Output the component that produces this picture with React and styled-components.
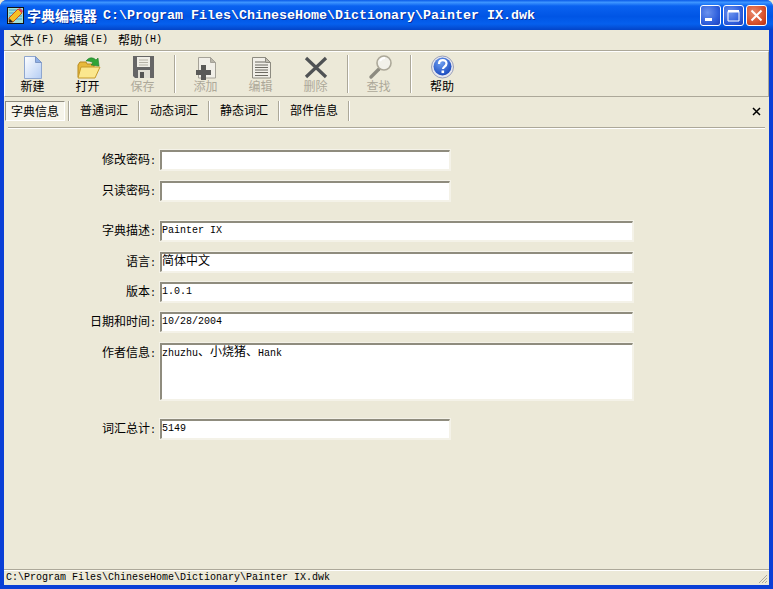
import React from "react";
import styled, { createGlobalStyle } from "styled-components";

const CJK = `"Noto Sans CJK SC", "Liberation Sans", sans-serif`;
const MONO = `"Liberation Mono", "Noto Sans CJK SC", monospace`;

const GlobalStyle = createGlobalStyle`
  html, body { margin: 0; padding: 0; background: #ece9d8; }
  #root { width: 773px; height: 589px; overflow: hidden; }
`;

/* =========================
   Window frame
========================= */

const Win = styled.div`
  width: 773px;
  height: 589px;
  box-sizing: border-box;
  display: flex;
  flex-direction: column;
  background: #0a3fd6;
  border-radius: 7px 7px 0 0;
  overflow: hidden;
  color: #000;
  font-family: ${CJK};
  font-size: 12px;
`;

const TitleBar = styled.div`
  height: 30px;
  flex: none;
  display: flex;
  align-items: center;
  padding: 0 6px 0 7px;
  gap: 3px;
  background: linear-gradient(
    180deg,
    #0a5ae8 0%,
    #3d95ff 8%,
    #0a62f0 20%,
    #0055e5 55%,
    #0560ee 80%,
    #0344c8 100%
  );
`;

const TitleText = styled.div`
  flex: 1;
  display: flex;
  align-items: center;
  color: #fff;
  font-weight: 700;
  white-space: nowrap;
  text-shadow: 1px 1px 0 #0a2f9a;
`;

const TitleCjk = styled.span`
  font-family: ${CJK};
  font-size: 14px;
  width: 76px;
`;

const TitleMono = styled.span`
  font-family: ${MONO};
  font-size: 13.33px;
`;

const WinButtons = styled.div`
  display: flex;
  gap: 2px;
`;

const WinBtn = styled.div`
  width: 21px;
  height: 21px;
  box-sizing: border-box;
  border: 1px solid #fff;
  border-radius: 3px;
  background: ${(p) =>
    p.$close
      ? "radial-gradient(circle at 35% 35%, #e98a6c, #d8512c 60%, #b8300f)"
      : "radial-gradient(circle at 35% 35%, #6c93ee, #2f5fdc 60%, #1c3fbb)"};
  display: flex;
  align-items: center;
  justify-content: center;
`;

const Body = styled.div`
  flex: 1;
  margin: 0 4px 4px;
  display: flex;
  flex-direction: column;
  background: #ece9d8;
  min-height: 0;
`;

/* =========================
   Menu + toolbar
========================= */

const MenuBar = styled.div`
  flex: none;
  display: flex;
  align-items: center;
  padding: 0 0 1px 6px;
  height: 19px;
  gap: 10px;
  border-bottom: 1px solid #aca899;
`;

const MenuItem = styled.div`
  white-space: nowrap;
  display: flex;
  align-items: center;
`;

const Hot = styled.span`
  font-family: ${MONO};
  font-size: 10px;
  margin-left: 2px;
`;

const ToolBar = styled.div`
  height: 46px;
  flex: none;
  box-sizing: border-box;
  display: flex;
  align-items: stretch;
  border-top: 1px solid #fff;
  border-bottom: 1px solid #aca899;
  border-left: 1px solid #fff;
  border-right: 1px solid #aca899;
`;

const ToolBtn = styled.div`
  width: ${(p) => p.$w || 55}px;
  display: flex;
  flex-direction: column;
  align-items: center;
  padding-top: 3px;
  box-sizing: border-box;
  color: ${(p) => (p.$off ? "#aca899" : "#000")};
`;

const ToolIcon = styled.svg`
  width: 28px;
  height: 26px;
  flex: none;
  display: block;
`;

const ToolLabel = styled.div`
  line-height: 14px;
  margin-top: -2px;
`;

const ToolSep = styled.div`
  width: 1px;
  margin: 3px 3px 3px 4px;
  background: #aca899;
  box-shadow: 1px 0 0 #fff;
`;

/* =========================
   Tabs
========================= */

const TabsRow = styled.div`
  height: 31px;
  flex: none;
  box-sizing: border-box;
  display: flex;
  align-items: flex-start;
  padding: 4px 0 0 1px;
  position: relative;
`;

const Tab = styled.div`
  height: 20px;
  line-height: 18px;
  padding: 0 6px;
  white-space: nowrap;
  margin-right: 4px;
  position: relative;
  box-sizing: border-box;
  ${(p) =>
    p.$active
      ? `background:#f6f4ea;border-top:1px solid #8f8c7e;border-left:1px solid #8f8c7e;border-right:1px solid #fff;border-bottom:1px solid #fff;line-height:17px;padding:0 5px;margin-right:3px;`
      : ""}
`;

const TabSep = styled.div`
  width: 1px;
  height: 20px;
  background: #aca899;
  box-shadow: 1px 0 0 #fff;
  margin-right: 5px;
`;

const CloseX = styled.svg`
  position: absolute;
  right: 8px;
  top: 10px;
  width: 9px;
  height: 9px;
`;

const TabRule = styled.div`
  position: absolute;
  left: 4px;
  right: 4px;
  bottom: 0;
  height: 1px;
  background: #aca899;
  box-shadow: 0 1px 0 #fff;
`;

/* =========================
   Form
========================= */

const Form = styled.div`
  flex: 1;
  min-height: 0;
  display: flex;
  flex-direction: column;
  padding-top: 22px;
`;

const Row = styled.div`
  display: flex;
  align-items: flex-start;
  margin-top: ${(p) => p.$gap || 0}px;
`;

const Label = styled.div`
  width: 152px;
  height: 18px;
  flex: none;
  text-align: right;
  line-height: 18px;
  white-space: nowrap;
`;

const Colon = styled.span`
  font-family: ${MONO};
  font-size: 10px;
  line-height: 1;
`;

const Field = styled.div`
  margin-left: 4px;
  width: ${(p) => p.$w}px;
  height: ${(p) => p.$h || 20}px;
  box-sizing: border-box;
  background: #fff;
  border-top: 2px solid #8f8c7e;
  border-left: 2px solid #8f8c7e;
  border-right: 1px solid #f4f2e8;
  border-bottom: 1px solid #f4f2e8;
  outline: 1px solid #f4f2e8;
  outline-offset: 0;
  padding: 0;
  font-family: ${MONO};
  font-size: 10px;
  line-height: 15px;
  white-space: nowrap;
`;

const FieldCjk = styled.span`
  font-family: ${CJK};
  font-size: 12px;
  line-height: 1;
`;

/* =========================
   Status bar
========================= */

const StatusBar = styled.div`
  height: 16px;
  flex: none;
  box-sizing: border-box;
  display: flex;
  align-items: center;
  padding-left: 2px;
  border-top: 1px solid #aca899;
  box-shadow: inset 0 1px 0 #fff;
  font-family: ${MONO};
  font-size: 10px;
  position: relative;
`;

const Grip = styled.svg`
  position: absolute;
  right: 1px;
  bottom: 1px;
  width: 12px;
  height: 12px;
`;

/* =========================
   Icons
========================= */

const AppIcon = () => (
  <svg width="17" height="17" viewBox="0 0 17 17" style={{ flex: "none" }}>
    <rect x="0.5" y="0.5" width="16" height="16" fill="#9fe0d8" stroke="#111" />
    <path d="M2 3h13M2 6h13M2 9h13M2 12h13" stroke="#3fa0c8" />
    <path d="M2 11 11 2l4 4-9 9-4 0z" fill="#f5c026" stroke="#c9501c" />
    <path d="M11 2l4 4 1-2-3-3z" fill="#e0405a" />
    <path d="M2 15.500l.5-4 3.500 3.500z" fill="#222" />
  </svg>
);

const NewIcon = () => (
  <ToolIcon viewBox="0 0 28 26">
    <defs>
      <linearGradient id="nw" x1="0" y1="0" x2="1" y2="1">
        <stop offset="0" stopColor="#fff" />
        <stop offset="1" stopColor="#b4cdf4" />
      </linearGradient>
    </defs>
    <path d="M5.500 1.500h11l6 6v16h-17z" fill="url(#nw)" stroke="#8ea6cf" />
    <path d="M16.500 1.500v6h6z" fill="#8fb0e6" stroke="#7d97c6" />
  </ToolIcon>
);

const OpenIcon = () => (
  <ToolIcon viewBox="0 0 28 26">
    <path d="M4 10l2-3h6l1 2h7v13H4z" fill="#e7b93c" stroke="#b88a1f" />
    <path d="M4 23 7 12h19l-5 11z" fill="#fbe78e" stroke="#c69a2a" />
    <path
      d="M12 6c3-4 7-4 10-1l2-2 1 8-8-1 2-2c-2-2-5-2-7-2z"
      fill="#2fa436"
      stroke="#1c7a28"
      strokeWidth="0.6"
    />
  </ToolIcon>
);

const SaveIcon = () => (
  <ToolIcon viewBox="0 0 28 26">
    <path d="M4 1h21v22H6l-2-2z" fill="#666" />
    <rect x="8" y="2" width="13" height="10" fill="#f0eee6" />
    <path d="M10 5h9M10 7.500h9M10 10h9" stroke="#b5b2a6" />
    <rect x="9" y="15" width="12" height="8" fill="#e0ded4" />
    <rect x="11" y="17" width="4" height="6" fill="#555" />
  </ToolIcon>
);

const AddIcon = () => (
  <ToolIcon viewBox="0 0 28 26">
    <path d="M6.500 2.500h12l5 5v15.500h-17z" fill="#f1efe8" stroke="#a5a298" />
    <path d="M18.500 2.500v5h5z" fill="#b8b5aa" stroke="#a5a298" />
    <path d="M9 10h5v5h5v5h-5v5H9v-5H4v-5h5z" fill="#5a5a58" />
  </ToolIcon>
);

const EditIcon = () => (
  <ToolIcon viewBox="0 0 28 26">
    <path d="M5.500 2.500h13l5 5v15.500h-18z" fill="#f1efe8" stroke="#8d8b80" />
    <path d="M18.500 2.500v5h5z" fill="#bdbab0" stroke="#8d8b80" />
    <path d="M8 7h10M8 10h13M8 12.500h13M8 15h13M8 17.500h13M8 20.500h13" stroke="#6d6b63" />
  </ToolIcon>
);

const DeleteIcon = () => (
  <ToolIcon viewBox="0 0 28 26">
    <path d="M4 3l20 19M24 3 4 22" stroke="#4f5254" strokeWidth="3.200" />
  </ToolIcon>
);

const FindIcon = () => (
  <ToolIcon viewBox="0 0 28 26">
    <path d="M14 14 6 22" stroke="#8d8b80" strokeWidth="3.400" strokeLinecap="round" />
    <circle cx="19" cy="8" r="7" fill="#f2f1ea" stroke="#aca899" strokeWidth="1.600" />
    <path d="M15 6c1-2 3-3 5-3" stroke="#fff" strokeWidth="2" fill="none" />
  </ToolIcon>
);

const HelpIcon = () => (
  <ToolIcon viewBox="0 0 28 26">
    <defs>
      <radialGradient id="hp" cx="0.4" cy="0.3" r="0.8">
        <stop offset="0" stopColor="#6f9ff0" />
        <stop offset="1" stopColor="#1140b8" />
      </radialGradient>
    </defs>
    <circle cx="14.500" cy="12" r="11" fill="#e6e6ee" stroke="#9aa0b8" />
    <circle cx="14.500" cy="11.500" r="9" fill="url(#hp)" />
    <path
      d="M11 9c0-5 7.500-5 7.500-.5 0 3-3.500 3-3.500 5.500"
      fill="none"
      stroke="#fff"
      strokeWidth="2.200"
    />
    <rect x="13.500" y="15.500" width="2.600" height="2.600" fill="#fff" />
  </ToolIcon>
);

/* =========================
   Component
========================= */

const MENUS = [
  ["文件", "(F)"],
  ["编辑", "(E)"],
  ["帮助", "(H)"],
];

const TABS = ["字典信息", "普通词汇", "动态词汇", "静态词汇", "部件信息"];

const FIELDS = [
  { label: "修改密码", w: 290, h: 20, gap: 0 },
  { label: "只读密码", w: 290, h: 20, gap: 11 },
  { label: "字典描述", w: 473, h: 20, gap: 20, value: "Painter IX" },
  { label: "语言", w: 473, h: 20, gap: 11, value: <FieldCjk>简体中文</FieldCjk> },
  { label: "版本", w: 473, h: 20, gap: 10, value: "1.0.1" },
  { label: "日期和时间", w: 473, h: 20, gap: 10, value: "10/28/2004" },
  {
    label: "作者信息",
    w: 473,
    h: 57,
    gap: 11,
    value: (
      <>
        zhuzhu<FieldCjk>、小烧猪、</FieldCjk>Hank
      </>
    ),
  },
  { label: "词汇总计", w: 290, h: 20, gap: 19, value: "5149" },
];

const App = () => (
  <>
    <GlobalStyle />
    <Win>
      <TitleBar>
        <AppIcon />
        <TitleText>
          <TitleCjk>字典编辑器</TitleCjk>
          <TitleMono>C:\Program Files\ChineseHome\Dictionary\Painter IX.dwk</TitleMono>
        </TitleText>
        <WinButtons>
          <WinBtn>
            <svg width="13" height="13" viewBox="0 0 13 13">
              <rect x="1" y="9" width="7" height="3" fill="#fff" />
            </svg>
          </WinBtn>
          <WinBtn>
            <svg width="13" height="13" viewBox="0 0 13 13">
              <path d="M1 2.500h11v9.500H1z" fill="none" stroke="#fff" />
              <rect x="1" y="1" width="11" height="2.500" fill="#fff" />
            </svg>
          </WinBtn>
          <WinBtn $close>
            <svg width="13" height="13" viewBox="0 0 13 13">
              <path d="M1.500 1.500l10 10M11.500 1.500l-10 10" stroke="#fff" strokeWidth="2" />
            </svg>
          </WinBtn>
        </WinButtons>
      </TitleBar>

      <Body>
        <MenuBar>
          {MENUS.map(([name, hot]) => (
            <MenuItem key={name}>
              {name}
              <Hot>{hot}</Hot>
            </MenuItem>
          ))}
        </MenuBar>

        <ToolBar>
          <ToolBtn><NewIcon /><ToolLabel>新建</ToolLabel></ToolBtn>
          <ToolBtn><OpenIcon /><ToolLabel>打开</ToolLabel></ToolBtn>
          <ToolBtn $off><SaveIcon /><ToolLabel>保存</ToolLabel></ToolBtn>
          <ToolSep />
          <ToolBtn $off><AddIcon /><ToolLabel>添加</ToolLabel></ToolBtn>
          <ToolBtn $off><EditIcon /><ToolLabel>编辑</ToolLabel></ToolBtn>
          <ToolBtn $off><DeleteIcon /><ToolLabel>删除</ToolLabel></ToolBtn>
          <ToolSep />
          <ToolBtn $off><FindIcon /><ToolLabel>查找</ToolLabel></ToolBtn>
          <ToolSep />
          <ToolBtn $w={56}><HelpIcon /><ToolLabel>帮助</ToolLabel></ToolBtn>
        </ToolBar>

        <TabsRow>
          {TABS.map((t, i) => (
            <React.Fragment key={t}>
              <Tab $active={i === 0}>{t}</Tab>
              <TabSep />
            </React.Fragment>
          ))}
          <CloseX viewBox="0 0 9 9">
            <path d="M1 1l7 7M8 1 1 8" stroke="#000" strokeWidth="1.500" />
          </CloseX>
          <TabRule />
        </TabsRow>

        <Form>
          {FIELDS.map((f) => (
            <Row key={f.label} $gap={f.gap}>
              <Label>
                {f.label}
                <Colon>:</Colon>
              </Label>
              <Field $w={f.w} $h={f.h}>{f.value}</Field>
            </Row>
          ))}
        </Form>

        <StatusBar>
          C:\Program Files\ChineseHome\Dictionary\Painter IX.dwk
          <Grip viewBox="0 0 12 12">
            <path d="M11 3 3 11M11 6 6 11M11 9 9 11" stroke="#aca899" />
          </Grip>
        </StatusBar>
      </Body>
    </Win>
  </>
);

export default App;
